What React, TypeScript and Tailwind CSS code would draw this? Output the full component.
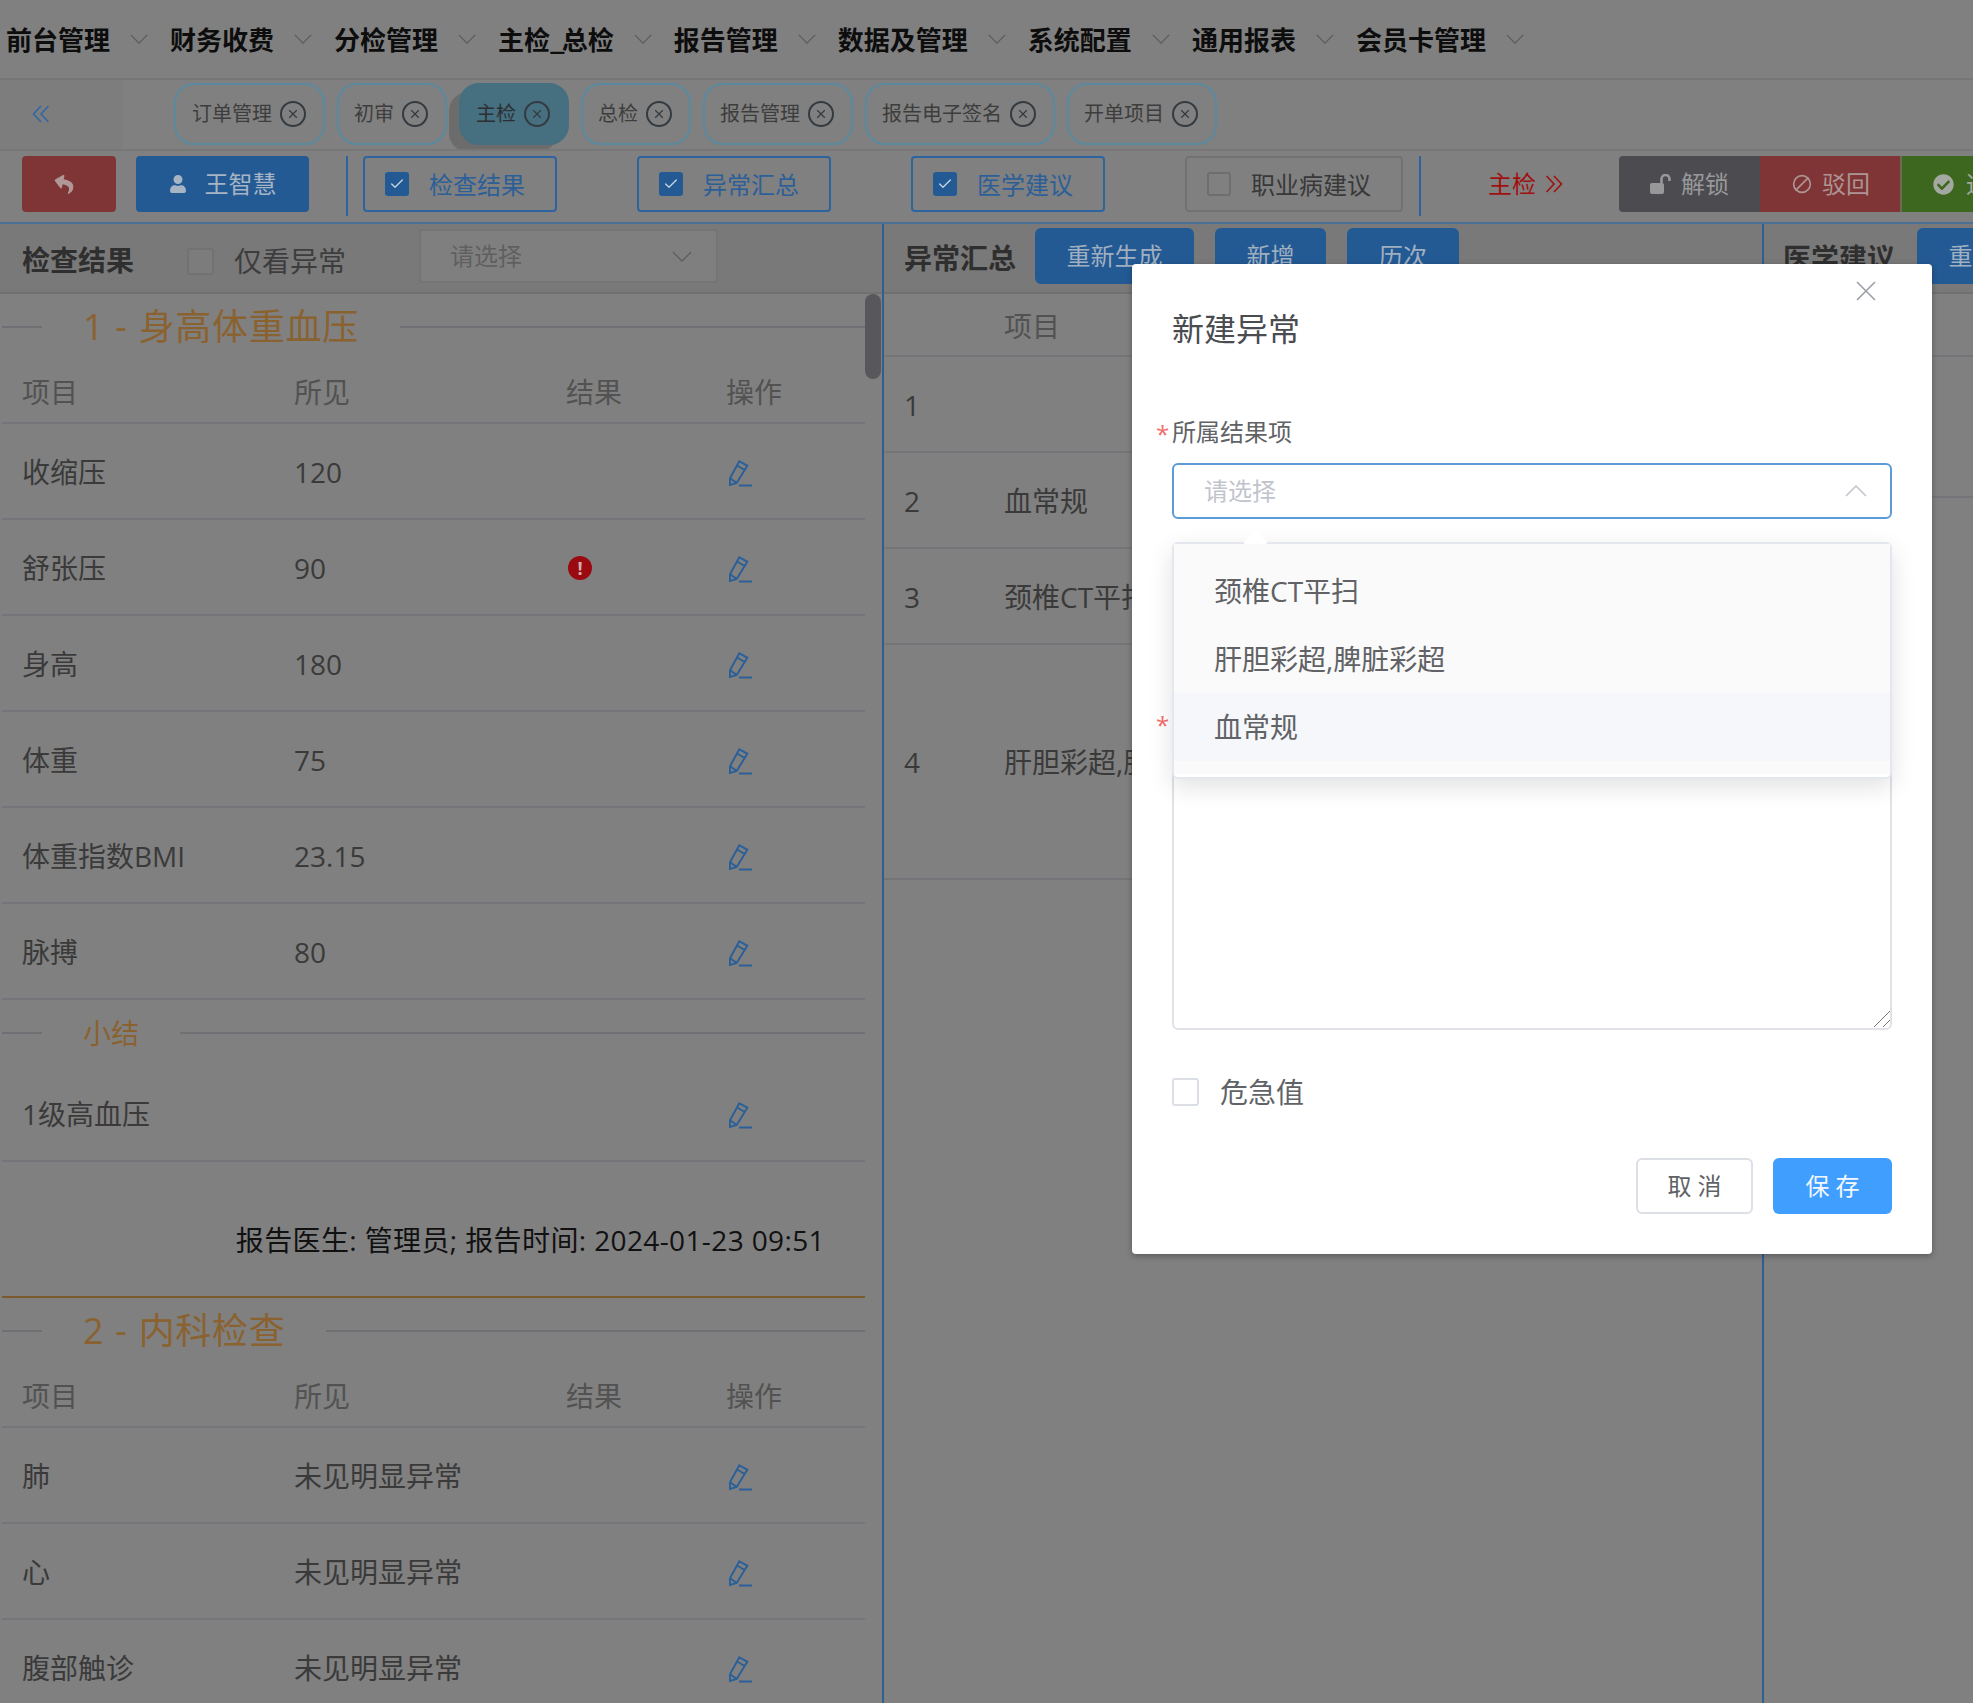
import { Ban, Check, X } from "lucide-react";
import { FaCheckCircle, FaReply, FaUser } from "react-icons/fa";

const navItems = ["前台管理", "财务收费", "分检管理", "主检_总检", "报告管理", "数据及管理", "系统配置", "通用报表", "会员卡管理"];
const tabs = ["订单管理", "初审", "主检", "总检", "报告管理", "报告电子签名", "开单项目"];
const vitals = [
  { name: "收缩压", value: "120" },
  { name: "舒张压", value: "90", abnormal: true },
  { name: "身高", value: "180" },
  { name: "体重", value: "75" },
  { name: "体重指数BMI", value: "23.15" },
  { name: "脉搏", value: "80" },
];
const internal = ["肺", "心", "腹部触诊"];
const options = ["颈椎CT平扫", "肝胆彩超,脾脏彩超", "血常规"];

const Chevron = ({ up = false, className = "" }: { up?: boolean; className?: string }) => (
  <svg viewBox="0 0 22 12" fill="none" stroke="currentColor" strokeWidth="1.5" className={className}>
    <path d={up ? "M1 11 11 1l10 10" : "M1 1l10 10L21 1"} />
  </svg>
);

const Pencil = () => (
  <svg viewBox="0 0 24 27" fill="none" stroke="#2a5f98" strokeWidth="2" className="h-[27px] w-[24px]">
    <path d="M10.3 1.3 18.3 5.7 7.7 23 1 25 .8 18.5Z" />
    <path d="M8 5.5 15.7 10M1.5 18.5 7.7 23M10 25.5h13" />
  </svg>
);

const CheckButton = ({ label, margin }: { label: string; margin: string }) => (
  <div className={`flex h-[56px] w-[194px] shrink-0 items-center rounded-[4px] border-2 border-[#2d639f] pl-[20px] text-[24px] text-[#2c5f98] ${margin}`}>
    <span className="flex h-[24px] w-[24px] items-center justify-center rounded-[3px] bg-[#235a94]">
      <Check size={16} strokeWidth={2} className="text-[#c6d3e0]" />
    </span>
    <span className="ml-[20px] pt-[2px]">{label}</span>
  </div>
);

const SectionTitle = ({ children, size }: { children: string; size: string }) => (
  <div className="flex h-[66px] items-center">
    <div className="h-[2px] w-[40px] bg-[#707074]" />
    <span className={`mx-[41px] whitespace-nowrap leading-none text-[#8a6230] ${size}`}>{children}</span>
    <div className="h-[2px] flex-1 bg-[#707074]" />
  </div>
);

const TableHead = () => (
  <div className="grid h-[64px] grid-cols-[272px_272px_160px_1fr] items-center border-b-2 border-[#757579] pl-[20px] pt-[2px] text-[28px] text-[#525252]">
    <span>项目</span>
    <span>所见</span>
    <span>结果</span>
    <span>操作</span>
  </div>
);

const ResultRow = ({ name, value, abnormal }: { name: string; value?: string; abnormal?: boolean }) => (
  <div className="grid h-[96px] grid-cols-[272px_272px_160px_1fr] items-center border-b-2 border-[#757579] pl-[20px] pt-[2px] text-[28px] text-[#3a3a3a]">
    <span>{name}</span>
    <span>{value}</span>
    <span>
      {abnormal && (
        <span className="ml-[2px] flex h-[24px] w-[24px] items-center justify-center rounded-full bg-[#9a0a10] text-[18px] font-bold leading-none text-[#d0b0b0]">!</span>
      )}
    </span>
    <span className="pl-[3px] pt-[2px]">
      <Pencil />
    </span>
  </div>
);

const Star = ({ className }: { className: string }) => (
  <span className={`absolute text-[24px] leading-none text-[#f56c6c] ${className}`}>*</span>
);

export default function App() {
  return (
    <div className="relative h-[1703px] w-[1973px] overflow-hidden bg-[#808080] font-['Open_Sans','Noto_Sans_CJK_SC',sans-serif]">
      {/* top menu */}
      <div className="flex h-[80px] items-center border-b-2 border-[#767676] pl-[6px]">
        {navItems.map((item) => (
          <div key={item} className="flex items-center">
            <span className="whitespace-nowrap font-['Noto_Sans_CJK_SC',sans-serif] text-[26px] font-bold leading-none text-[#0d0d0d]">
              {item === "主检_总检" ? (
                <>
                  主检<span className="tracking-[-3px]">_</span>总检
                </>
              ) : (
                item
              )}
            </span>
            <Chevron className="ml-[20px] mr-[22px] h-[10px] w-[18px] text-[#5a5a5a]" />
          </div>
        ))}
      </div>

      {/* tabs */}
      <div className="flex h-[71px] overflow-hidden border-b-2 border-[#777777]">
        <div className="flex w-[122px] shrink-0 items-center bg-[#7d7d7d] pb-[2px] pl-[32px]">
          <svg viewBox="0 0 18 18" fill="none" stroke="#2f68a5" strokeWidth="1.6" className="h-[18px] w-[18px]">
            <path d="M9 1 1.5 9 9 17M16.5 1 9 9l7.5 8" />
          </svg>
        </div>
        <div className="ml-[52px] flex gap-[12px] pt-[3px]">
          {tabs.map((tab) => (
            <div
              key={tab}
              className={
                tab === "主检"
                  ? "flex h-[62px] items-center gap-[8px] rounded-[20px] border-2 border-[#466f80] bg-[#466f80] pl-[15px] pr-[17px] text-[20px] text-[#2b2f33] shadow-[-11px_8px_0_-1px_#6c6c6c]"
                  : tab === "订单管理"
                    ? "flex h-[62px] items-center gap-[8px] rounded-[20px] border-2 border-[#5a8aa0] pl-[16px] pr-[17px] text-[20px] text-[#3d3d3d]"
                    : "flex h-[62px] items-center gap-[8px] rounded-[20px] border-2 border-[#5a8aa0] pl-[15px] pr-[17px] text-[20px] text-[#3d3d3d]"
              }
            >
              <span className="whitespace-nowrap">{tab}</span>
              <span className="flex h-[26px] w-[26px] items-center justify-center rounded-full border-2 border-[#333a40]">
                <X size={14} strokeWidth={2} className="text-[#333a40]" />
              </span>
            </div>
          ))}
        </div>
      </div>

      {/* toolbar */}
      <div className="flex h-[73px] overflow-hidden border-b-2 border-[#4a7094] pl-[22px] pt-[5px]">
        <div className="flex h-[56px] w-[94px] shrink-0 items-center justify-center rounded-[4px] bg-[#7f3535] pr-[10px]">
          <FaReply size={20} className="rotate-[12deg] text-[#b09898]" />
        </div>
        <div className="ml-[20px] flex h-[56px] w-[173px] shrink-0 items-center justify-center gap-[18px] rounded-[4px] bg-[#235a94] text-[24px] text-[#a6b4c4]">
          <FaUser size={18} />
          <span>王智慧</span>
        </div>
        <div className="ml-[37px] h-[60px] w-[2px] shrink-0 bg-[#2d639f]" />
        <CheckButton label="检查结果" margin="ml-[15px]" />
        <CheckButton label="异常汇总" margin="ml-[80px]" />
        <CheckButton label="医学建议" margin="ml-[80px]" />
        <div className="ml-[80px] flex h-[56px] w-[218px] shrink-0 items-center rounded-[4px] border-2 border-[#727272] pl-[20px] text-[24px] text-[#383838]">
          <span className="h-[24px] w-[24px] rounded-[3px] border-2 border-[#6e6e6e]" />
          <span className="ml-[20px] whitespace-nowrap pt-[2px]">职业病建议</span>
        </div>
        <div className="ml-[16px] h-[60px] w-[2px] shrink-0 bg-[#2d639f]" />
        <div className="ml-[67px] flex h-[56px] w-[131px] shrink-0 items-center text-[24px] text-[#a01010]">
          <span>主检</span>
          <svg viewBox="0 0 18 18" fill="none" stroke="#a01010" strokeWidth="1.6" className="ml-[9px] h-[18px] w-[18px]">
            <path d="M1.5 1 9 9l-7.5 8M9 1l7.5 8L9 17" />
          </svg>
        </div>
        <div className="flex h-[56px] w-[141px] shrink-0 items-center rounded-l-[4px] bg-[#4c4c50] pl-[31px] text-[24px] text-[#98989a]">
          <svg viewBox="0 0 22 20" className="h-[20px] w-[22px]">
            <rect x="0" y="9" width="14" height="11" rx="2" fill="currentColor" />
            <path d="M11.5 9V5a4 4 0 0 1 8 0v2" fill="none" stroke="currentColor" strokeWidth="2.6" />
          </svg>
          <span className="ml-[9px]">解锁</span>
        </div>
        <div className="flex h-[56px] w-[140px] shrink-0 items-center bg-[#7f3535] pl-[32px] text-[24px] text-[#ad9494]">
          <Ban size={20} strokeWidth={2} className="-scale-x-100" />
          <span className="ml-[10px]">驳回</span>
        </div>
        <div className="flex h-[56px] w-[120px] shrink-0 items-center border-l-2 border-[#6b6b5a] bg-[#3d671f] pl-[31px] text-[24px] text-[#a3a8a0]">
          <FaCheckCircle size={21} />
          <span className="ml-[12px]">通过</span>
        </div>
      </div>

      {/* main columns */}
      <div className="flex h-[1479px]">
        <div className="relative w-[884px] shrink-0 border-r-2 border-[#2e5f92] pl-[2px]">
          <div className="-ml-[2px] flex h-[70px] items-start border-b-2 border-[#707070] bg-[#797979] pl-[22px]">
            <span className="mt-[16px] text-[28px] font-bold leading-[40px] text-[#2f2f2f]">检查结果</span>
            <span className="ml-[53px] mt-[24px] h-[27px] w-[27px] rounded-[3px] border-2 border-[#727272] bg-[#7c7c7c]" />
            <span className="ml-[20px] mt-[17px] text-[28px] leading-[40px] text-[#3d3d3d]">仅看异常</span>
            <div className="ml-[73px] mt-[5px] flex h-[54px] w-[299px] items-center rounded-[4px] border-2 border-[#757575] bg-[#7f7f7f] pl-[29px] text-[24px] text-[#5f5f5f]">
              <span>请选择</span>
              <Chevron className="ml-[150px] h-[11px] w-[20px] text-[#5f5f5f]" />
            </div>
          </div>
          <div className="w-[863px]">
            <SectionTitle size="text-[36px] tracking-[0.7px] [word-spacing:1px]">1 - 身高体重血压</SectionTitle>
            <TableHead />
            {vitals.map((row) => (
              <ResultRow key={row.name} {...row} />
            ))}
            <SectionTitle size="text-[28px]">小结</SectionTitle>
            <ResultRow name="1级高血压" />
            <div className="flex h-[136px] justify-end border-b-2 border-[#7a5a2a] pr-[40px] pt-[62px] text-[28px] leading-[32px] tracking-[0.38px] text-[#111111]">
              报告医生: 管理员; 报告时间: 2024-01-23 09:51
            </div>
            <SectionTitle size="text-[36px] tracking-[0.7px] [word-spacing:1px]">2 - 内科检查</SectionTitle>
            <TableHead />
            {internal.map((name) => (
              <ResultRow key={name} name={name} value="未见明显异常" />
            ))}
          </div>
          <div className="absolute left-[865px] top-[70px] h-[85px] w-[16px] rounded-full bg-[#58585c]" />
        </div>

        <div className="w-[880px] shrink-0 border-r-2 border-[#2e5f92]">
          <div className="flex h-[70px] items-start border-b-2 border-[#707070] bg-[#797979] pl-[20px]">
            <span className="mt-[14px] text-[28px] font-bold leading-[40px] text-[#2f2f2f]">异常汇总</span>
            <div className="ml-[19px] mt-[4px] flex h-[56px] w-[159px] items-center justify-center rounded-[6px] bg-[#235a94] text-[24px] text-[#a0afc0]">重新生成</div>
            <div className="ml-[21px] mt-[4px] flex h-[56px] w-[111px] items-center justify-center rounded-[6px] bg-[#235a94] text-[24px] text-[#a0afc0]">新增</div>
            <div className="ml-[21px] mt-[4px] flex h-[56px] w-[112px] items-center justify-center rounded-[6px] bg-[#235a94] text-[24px] text-[#a0afc0]">历次</div>
          </div>
          <div className="grid h-[63px] grid-cols-[100px_1fr] items-center border-b-2 border-[#757579] pl-[20px] pt-[2px] text-[28px] text-[#525252]">
            <span />
            <span>项目</span>
          </div>
          <div className="grid h-[96px] grid-cols-[100px_1fr] items-center border-b-2 border-[#757579] pl-[20px] pt-[2px] text-[28px] text-[#3a3a3a]">
            <span>1</span>
            <span />
          </div>
          <div className="grid h-[96px] grid-cols-[100px_1fr] items-center border-b-2 border-[#757579] pl-[20px] pt-[2px] text-[28px] text-[#3a3a3a]">
            <span>2</span>
            <span>血常规</span>
          </div>
          <div className="grid h-[96px] grid-cols-[100px_1fr] items-center border-b-2 border-[#757579] pl-[20px] pt-[2px] text-[28px] text-[#3a3a3a]">
            <span>3</span>
            <span>颈椎CT平扫</span>
          </div>
          <div className="grid h-[235px] grid-cols-[100px_1fr] items-center border-b-2 border-[#757579] pl-[20px] text-[28px] text-[#3a3a3a]">
            <span>4</span>
            <span>肝胆彩超,脾脏彩超</span>
          </div>
        </div>

        <div className="min-w-0 flex-1">
          <div className="flex h-[70px] items-start overflow-hidden border-b-2 border-[#707070] bg-[#797979] pl-[19px]">
            <span className="mt-[14px] shrink-0 text-[28px] font-bold leading-[40px] text-[#2f2f2f]">医学建议</span>
            <div className="ml-[22px] mt-[4px] flex h-[56px] w-[159px] shrink-0 items-center justify-center rounded-[6px] bg-[#235a94] text-[24px] text-[#a0afc0]">重新生成</div>
          </div>
          <div className="h-[63px] border-b-2 border-[#757579]" />
          <div className="h-[141px] border-b-2 border-[#757579]" />
        </div>
      </div>

      {/* dialog */}
      <div className="absolute left-[1132px] top-[264px] h-[990px] w-[800px] rounded-[4px] bg-white shadow-[0_2px_6px_rgba(0,0,0,0.3)]">
        <svg viewBox="0 0 20 20" fill="none" stroke="#9a9ea6" strokeWidth="1.6" className="absolute right-[56px] top-[17px] h-[20px] w-[20px]">
          <path d="M1 1l18 18M19 1 1 19" />
        </svg>
        <div className="pl-[40px] pt-[45px] text-[32px] leading-[40px] text-[#4a4c50]">新建异常</div>

        <div className="relative mx-[40px] pt-[67px]">
          <div className="relative text-[24px] leading-[32px] text-[#606266]">
            <Star className="-left-[16px] top-[6px]" />
            所属结果项
          </div>
          <div className="mt-[15px] flex h-[56px] items-center justify-between rounded-[6px] border-2 border-[#5b9bd8] pl-[30px] pr-[23px] text-[24px] text-[#c0c4cc]">
            <span>请选择</span>
            <Chevron up className="h-[12px] w-[22px] text-[#c0c4cc]" />
          </div>

          <div className="relative mt-[188px] h-[32px]">
            <Star className="-left-[16px] top-[6px]" />
          </div>
          <div className="relative mt-[14px]">
            <textarea className="block h-[277px] w-full resize-none rounded-[6px] border-2 border-[#e0e2e8] outline-none" />
            <svg viewBox="0 0 16 16" fill="none" stroke="#555555" strokeWidth="0.8" className="absolute bottom-[3px] right-[2px] h-[16px] w-[16px]">
              <path d="M0 16 16 0M9 16l7-7" />
            </svg>
          </div>

          <div className="mt-[48px] flex h-[28px] items-center text-[28px] text-[#606266]">
            <span className="h-[28px] w-[27px] rounded-[3px] border-2 border-[#dcdfe6]" />
            <span className="ml-[21px]">危急值</span>
          </div>

          <div className="mt-[52px] flex justify-end gap-[20px]">
            <div className="flex h-[56px] w-[117px] items-center justify-center rounded-[6px] border-2 border-[#dcdfe6] text-[24px] text-[#606266]">取 消</div>
            <div className="flex h-[56px] w-[119px] items-center justify-center rounded-[6px] bg-[#409eff] text-[24px] text-[#f2f8ff]">保 存</div>
          </div>

          {/* select dropdown */}
          <div className="absolute left-0 right-0 top-[193px] h-[237px] rounded-[6px] border-2 border-[#e4e7ed] bg-white shadow-[0_8px_24px_rgba(0,0,0,0.12)]">
            <div className="absolute -top-[10px] left-[73px] h-[17px] w-[17px] rotate-45 bg-white" />
            <div className="relative bg-[#fafafa] pb-[13px] pt-[13px]">
              {options.map((opt) => (
                <div
                  key={opt}
                  className={
                    opt === "血常规"
                      ? "flex h-[68px] items-center bg-[#f5f7fa] pl-[40px] text-[28px] text-[#606266]"
                      : "flex h-[68px] items-center pl-[40px] text-[28px] text-[#606266]"
                  }
                >
                  {opt}
                </div>
              ))}
            </div>
          </div>
        </div>
      </div>
    </div>
  );
}
